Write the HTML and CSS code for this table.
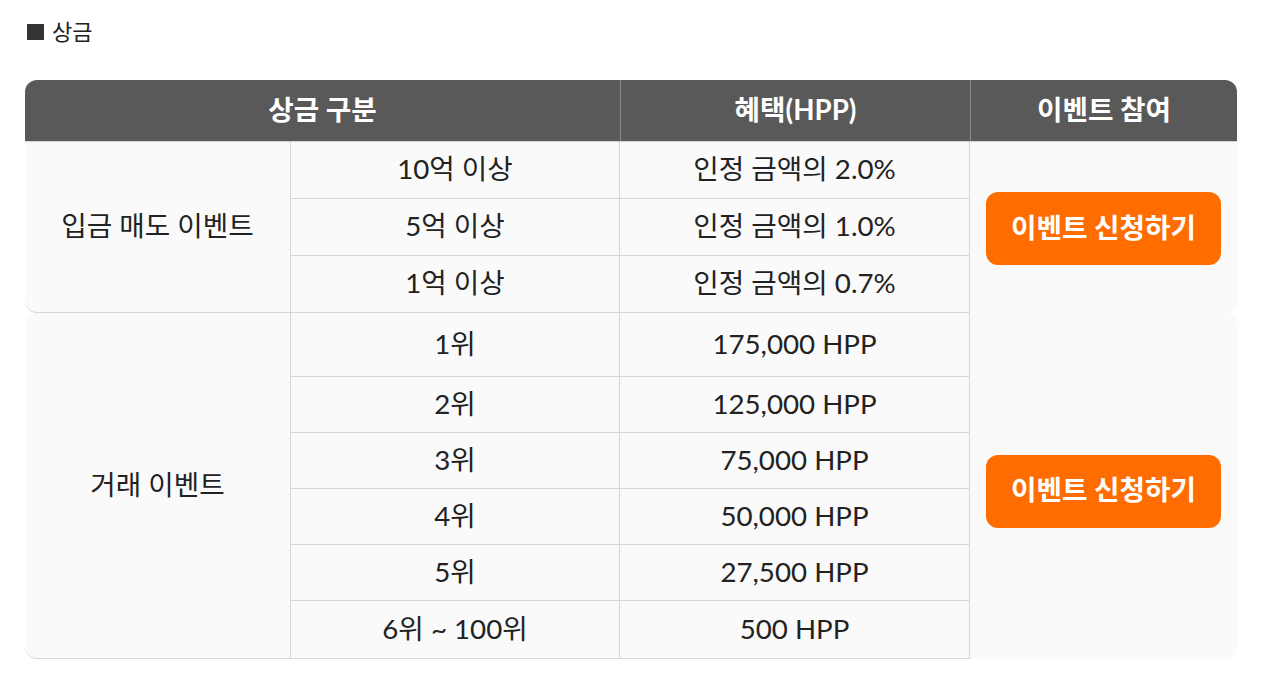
FILE: index.html
```html
<!DOCTYPE html>
<html lang="ko">
<head>
<meta charset="utf-8">
<title>상금</title>
<link rel="stylesheet" href="styles.css">
</head>
<body>
<div class="wrap">
  <h2 class="title"><span class="sq"></span>상금</h2>
  <table class="prize">
    <colgroup>
      <col class="c1"><col class="c2"><col class="c3"><col class="c4">
    </colgroup>
    <thead>
      <tr>
        <th colspan="2" class="h-first">상금 구분</th>
        <th class="h-mid">혜택(HPP)</th>
        <th class="h-last">이벤트 참여</th>
      </tr>
    </thead>
    <tbody class="g1">
      <tr>
        <td rowspan="3" class="name">입금 매도 이벤트</td>
        <td class="m1">10억 이상</td>
        <td class="m2">인정 금액의 2.0%</td>
        <td rowspan="3" class="act"><a class="btn" href="#">이벤트 신청하기</a></td>
      </tr>
      <tr><td class="m1">5억 이상</td><td class="m2">인정 금액의 1.0%</td></tr>
      <tr><td class="m1">1억 이상</td><td class="m2">인정 금액의 0.7%</td></tr>
    </tbody>
    <tbody class="g2">
      <tr class="first">
        <td rowspan="6" class="name">거래 이벤트</td>
        <td class="m1">1위</td>
        <td class="m2">175,000 HPP</td>
        <td rowspan="6" class="act"><a class="btn" href="#">이벤트 신청하기</a></td>
      </tr>
      <tr><td class="m1">2위</td><td class="m2">125,000 HPP</td></tr>
      <tr><td class="m1">3위</td><td class="m2">75,000 HPP</td></tr>
      <tr><td class="m1">4위</td><td class="m2">50,000 HPP</td></tr>
      <tr><td class="m1">5위</td><td class="m2">27,500 HPP</td></tr>
      <tr class="last"><td class="m1">6위 ~ 100위</td><td class="m2">500 HPP</td></tr>
    </tbody>
  </table>
</div>
</body>
</html>
```
FILE: styles.css
```css
html, body {
  margin: 0;
  padding: 0;
  background: #ffffff;
}
body {
  font-family: Lato, "Noto Sans CJK KR", sans-serif;
  color: #222222;
}
.wrap {
  padding: 20px 25px 20px 25px;
}
.title {
  margin: 0 0 36px 2px;
  height: 24px;
  display: flex;
  align-items: center;
  font-size: 22px;
  font-weight: 400;
  line-height: 24px;
  color: #222;
}
.title .sq {
  display: inline-block;
  width: 17px;
  height: 16px;
  background: #333333;
  margin-right: 8px;
}
.prize {
  width: 1212px;
  table-layout: fixed;
  border-collapse: separate;
  border-spacing: 0;
  font-size: 27.7px;
  line-height: 1.2;
}
.c1 { width: 265px; }
.c2 { width: 330px; }
.c3 { width: 350px; }
.c4 { width: 267px; }
.prize th {
  background: #595959;
  color: #ffffff;
  font-weight: 700;
  height: 62px;
  padding: 0 0 2px;
  box-sizing: border-box;
  text-align: center;
  border-bottom: 1px solid #d4d4d4;
}
.prize th.h-first { border-top-left-radius: 12px; }
.prize th.h-mid { border-left: 1px solid #8a8a8a; }
.prize th.h-last { border-left: 1px solid #8a8a8a; border-top-right-radius: 12px; }
.prize td {
  background: #fafafa;
  padding: 0 0 2px;
  text-align: center;
  vertical-align: middle;
  height: 54px;
}
.prize td.act { padding: 0; }
.prize td.m1 {
  border-left: 1px solid #d6d6d6;
  border-right: 1px solid #d6d6d6;
  border-bottom: 1px solid #d6d6d6;
}
.prize td.m2 {
  border-right: 1px solid #d6d6d6;
  border-bottom: 1px solid #d6d6d6;
}
.prize td.name {
  border-bottom: 1px solid #d6d6d6;
  border-bottom-left-radius: 12px;
}
.prize td.act {
  border-bottom-right-radius: 12px;
}
.g2 td.name { border-top-left-radius: 12px; }
.g2 td.act { border-top-right-radius: 12px; }
.g2 td { height: 53px; }
.g2 tr.first td { height: 61px; }
.g2 tr.last td { height: 55px; }
.btn {
  display: flex;
  align-items: center;
  justify-content: center;
  width: 235px;
  height: 73px;
  margin: 0 auto;
  padding-bottom: 2px;
  box-sizing: border-box;
  background: #ff6d00;
  color: #ffffff;
  font-weight: 700;
  font-size: 27.7px;
  text-decoration: none;
  border-radius: 12px;
}
.g1 .btn { margin-top: 2px; }
.g2 .btn { margin-top: 10px; }
```
